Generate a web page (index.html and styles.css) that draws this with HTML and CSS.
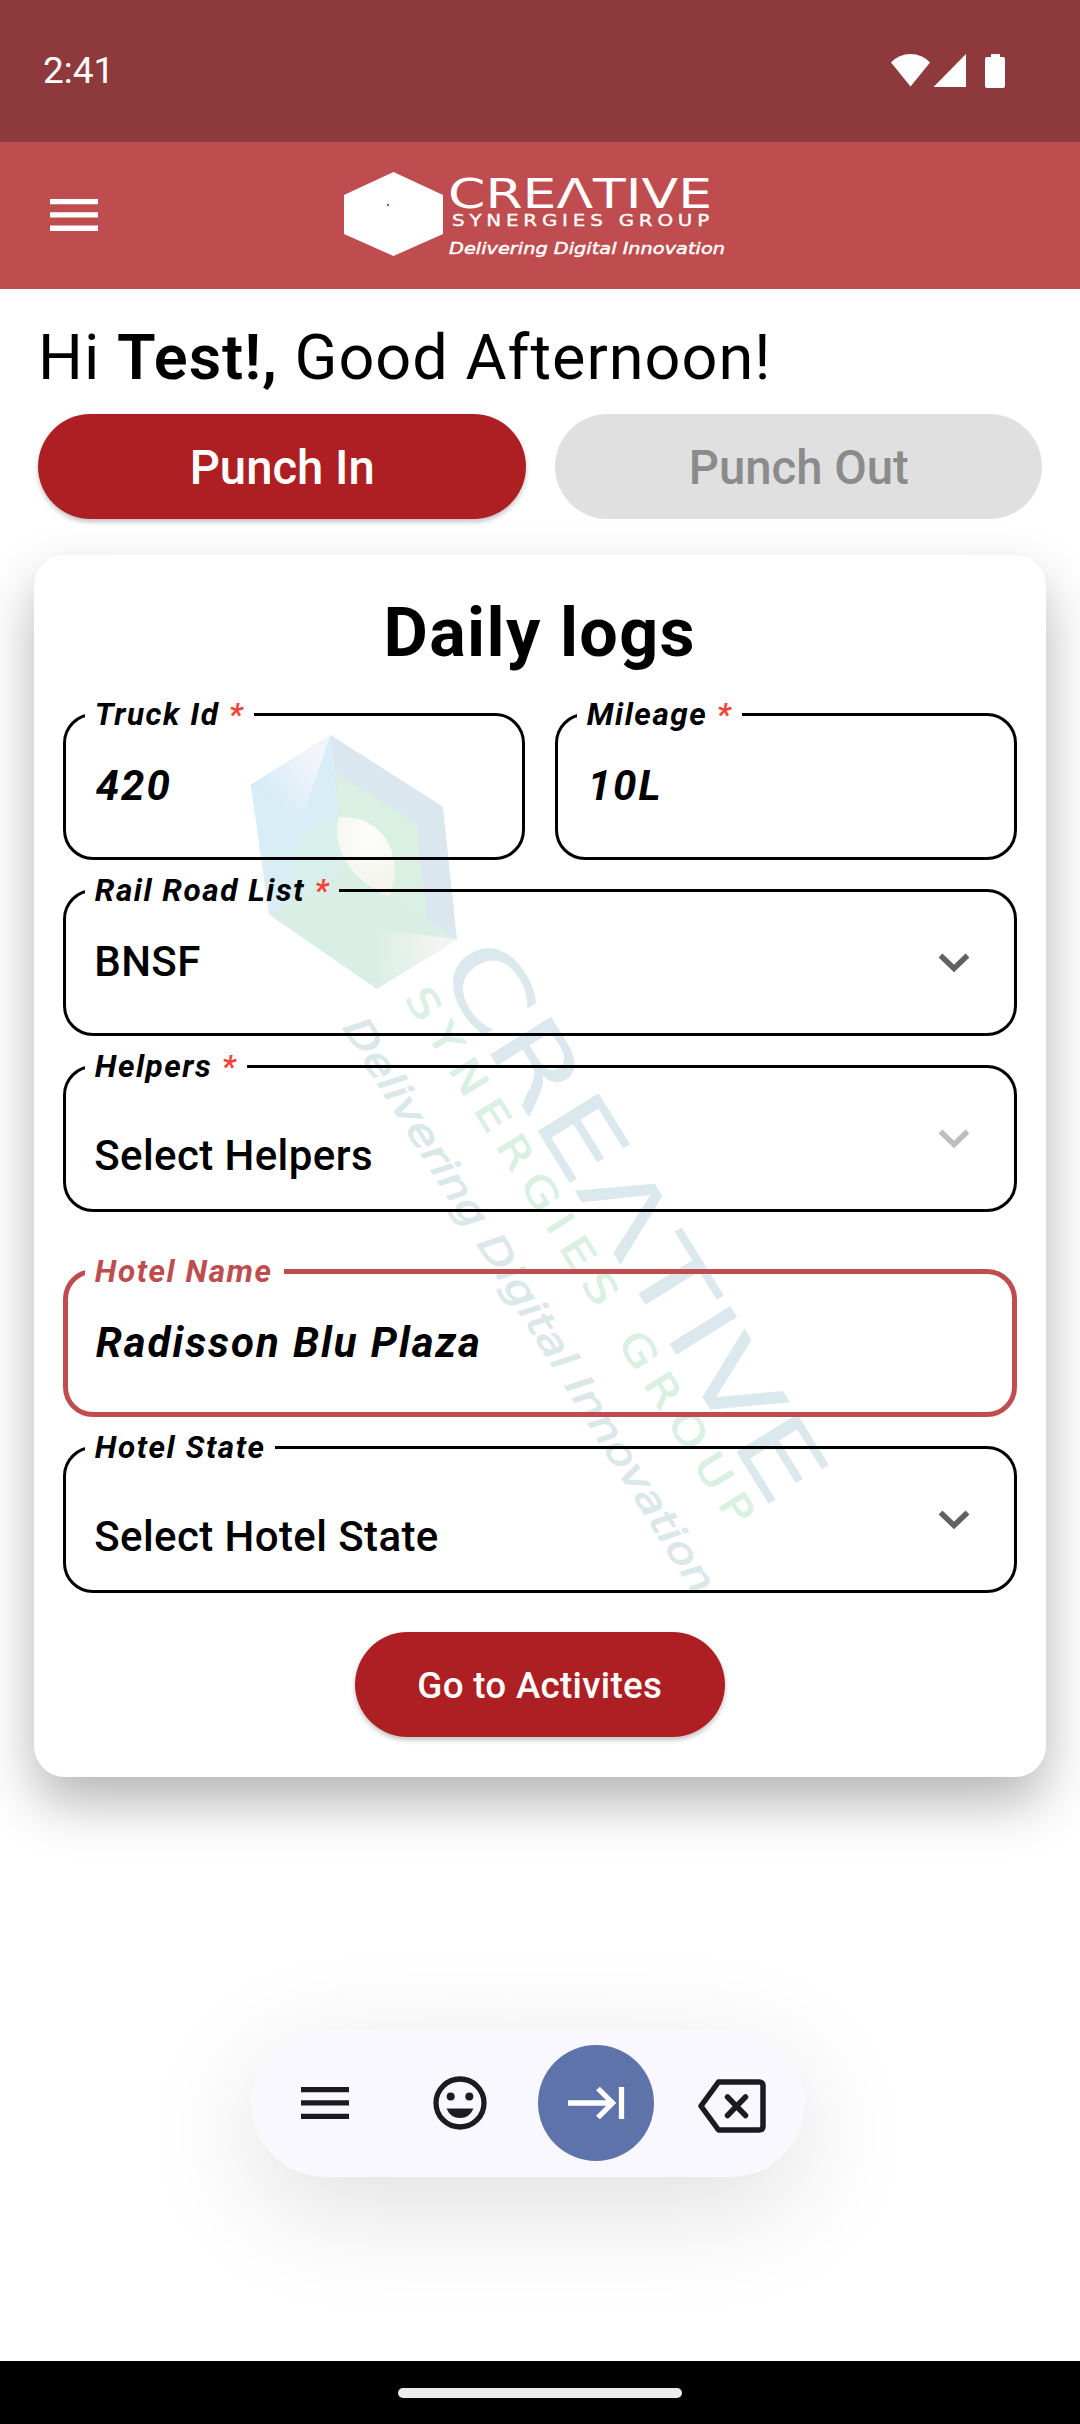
FILE: index.html
```html
<!DOCTYPE html>
<html lang="en">
<head>
<meta charset="utf-8">
<title>Daily logs</title>
<link rel="stylesheet" href="styles.css">
</head>
<body>
<header class="status">
  <span class="time">2:41</span>
  <svg class="status-icons" width="116" height="36" viewBox="890 53 116 36" fill="#fff">
    <path d="M910.5 86.5 L891 62.5Q899 54 910.5 54 Q922 54 930 62.5Z"/>
    <path d="M966 54V87H933.5Z"/>
    <path d="M991 54h9v3h3q2 0 2 2v27q0 2-2 2h-16q-2 0-2-2V59q0-2 2-2h4z"/>
  </svg>
</header>
<nav class="appbar">
  <svg class="menu" width="48" height="32" viewBox="0 0 48 32" fill="#fff"><path d="M0 0h48v5.3H0zM0 13.3h48v5.3H0zM0 26.6h48v5.3H0z"/></svg>
  <svg class="logo" width="384" height="90" viewBox="0 0 384 90">
    <path d="M49.5 0 99 23V62L49.5 84 0 62V23Z" fill="#fff"/>
    <rect x="43" y="32" width="2" height="2" fill="#bf4d4f"/>
    <g fill="#fff" stroke="#fff">
      <text class="logo-name" x="104" y="36" textLength="264" lengthAdjust="spacingAndGlyphs">CREΛTIVE</text>
      <text class="logo-sub" x="108" y="54" textLength="262" lengthAdjust="spacingAndGlyphs">SYNERGIES GROUP</text>
      <text class="logo-tag" x="105" y="82" textLength="276" lengthAdjust="spacingAndGlyphs">Delivering Digital Innovation</text>
    </g>
  </svg>
</nav>
<main>
  <h1 class="greeting">Hi <b>Test!,</b> Good Afternoon!</h1>
  <div class="punch">
    <button class="btn">Punch In</button>
    <button class="btn off">Punch Out</button>
  </div>
  <section class="card">
    <svg class="watermark" width="1013" height="1222" viewBox="33 555 1013 1222">
      <defs>
        <linearGradient id="facet" gradientUnits="userSpaceOnUse" x1="322" y1="762" x2="275" y2="800"><stop offset="0" stop-color="#f3f5fb"/><stop offset="1" stop-color="#d9ecf6"/></linearGradient>
        <linearGradient id="foot" gradientUnits="userSpaceOnUse" x1="440" y1="945" x2="372" y2="950"><stop offset="0" stop-color="#f3f5f3"/><stop offset="1" stop-color="#d9eee4"/></linearGradient>
        <radialGradient id="pearl" gradientUnits="userSpaceOnUse" cx="368" cy="837" r="45"><stop offset="0" stop-color="#fdfdfc"/><stop offset="1" stop-color="#f5f5ee"/></radialGradient>
      </defs>
      <path fill="#d9edf6" d="M330.600 735 343 869 269 914.500 250.700 784.700Z"/>
      <path fill="url(#facet)" d="M330.600 735 302 818 250.700 784.700Z"/>
      <path fill="#dbe7ee" d="M330.600 735 442.900 806.700 457 939.300 343 869Z"/>
      <path fill="#d9f0e3" d="M335.400 773 416 823 427 919.300 457 939.300 400 940 343 869Z"/>
      <path fill="#d9eee4" d="M343 869 457 939.300 376.800 989 269 914.500Z"/>
      <path fill="#d9efeb" d="M339 817A51 51 0 0 0 300 892L343 869Z"/>
      <path fill="url(#foot)" d="M360.600 927 457 939.300 376.800 989Z"/>
      <path fill="url(#pearl)" d="M339 817.500C380 813 407 854 389 896C360 887 328 851 339 817.500Z"/>
      <g transform="translate(353.7 862) rotate(58.2) scale(2.425) translate(-49.5 -42)">
        <text class="logo-name" fill="#dbe8ee" x="104" y="36" textLength="264" lengthAdjust="spacingAndGlyphs">CREΛTIVE</text>
        <text class="logo-sub" fill="#d9f0e3" stroke="#d9f0e3" x="108" y="54" textLength="262" lengthAdjust="spacingAndGlyphs">SYNERGIES GROUP</text>
        <text class="logo-tag" fill="#dbe8ea" stroke="#dbe8ea" x="105" y="82" textLength="276" lengthAdjust="spacingAndGlyphs">Delivering Digital Innovation</text>
      </g>
    </svg>
    <h2>Daily logs</h2>
    <div class="fields">
      <div class="pair">
        <fieldset><legend>Truck Id <i>*</i></legend><span class="value typed">420</span></fieldset>
        <fieldset><legend>Mileage <i>*</i></legend><span class="value typed">10L</span></fieldset>
      </div>
      <fieldset><legend>Rail Road List <i>*</i></legend><span class="value">BNSF</span><svg class="chev" width="32" height="20" viewBox="0 0 32 20"><path d="M2.500 2.500 16 15.500 29.500 2.500"/></svg></fieldset>
      <fieldset><legend>Helpers <i>*</i></legend><span class="value low">Select Helpers</span><svg class="chev dim" width="32" height="20" viewBox="0 0 32 20"><path d="M2.500 2.500 16 15.500 29.500 2.500"/></svg></fieldset>
      <fieldset class="focused"><legend>Hotel Name</legend><span class="value typed">Radisson Blu Plaza</span></fieldset>
      <fieldset><legend>Hotel State</legend><span class="value low">Select Hotel State</span><svg class="chev" width="32" height="20" viewBox="0 0 32 20"><path d="M2.500 2.500 16 15.500 29.500 2.500"/></svg></fieldset>
    </div>
    <button class="btn go">Go to Activites</button>
  </section>
</main>
<div class="keys">
  <svg width="48" height="32" viewBox="0 0 48 32" fill="#1b1b20"><path d="M0 0h48v5.300H0zM0 13.300h48v5.300H0zM0 26.700h48V32H0z"/></svg>
  <svg width="54" height="54" viewBox="0 0 54 54" fill="#1b1b20"><circle cx="27" cy="27" r="24" fill="none" stroke="#1b1b20" stroke-width="5.300"/><circle cx="17.700" cy="20.500" r="4"/><circle cx="36.300" cy="20.500" r="4"/><path d="M13.500 32.500h27Q36.500 42 27 42T13.500 32.500Z"/></svg>
  <span class="tab"><svg width="57" height="34" viewBox="0 0 57 34" fill="none" stroke="#fff" stroke-width="5.300"><path d="M0 17h45M30 2.500 44.500 17 30 31.500M53.500 1v32"/></svg></span>
  <svg class="back" width="68" height="54" viewBox="0 0 68 54" fill="none" stroke="#1b1b20" stroke-width="5.500" stroke-linejoin="round" stroke-linecap="round"><path d="M20.500 3H61q4 0 4 4V47q0 4-4 4H20.500L3 27ZM29.500 18 47.500 36.500M47.500 18 29.500 36.500"/></svg>
</div>
<footer class="gesture"><span></span></footer>
</body>
</html>
```
FILE: styles.css
```css
* { box-sizing: border-box; }
body {
  margin: 0;
  width: 1080px;
  height: 2424px;
  display: flex;
  flex-direction: column;
  overflow: hidden;
  background: #fff;
  color: #000;
  font-family: Roboto, sans-serif;
}
svg { display: block; flex: none; }
.status {
  height: 142px;
  flex: none;
  padding: 0 74px 0 43px;
  display: flex;
  align-items: center;
  justify-content: space-between;
  background: #8e3a3d;
}
.time { font-size: 37px; line-height: 44px; color: #fff; }
.appbar {
  height: 147px;
  flex: none;
  display: flex;
  align-items: flex-start;
  padding: 30px 0 0 50px;
  background: #bf4d4f;
}
.menu { margin-top: 27px; }
.logo { margin-left: 245.5px; overflow: visible; }
.logo-name { font: 400 40.5px "DejaVu Sans", sans-serif; stroke: none; }
.logo-sub { font: 400 16.5px "DejaVu Sans", sans-serif; letter-spacing: 4px; stroke-width: 0.35; }
.logo-tag { font: italic 400 15.5px "DejaVu Sans", sans-serif; stroke-width: 0.45; }

main { padding: 31px 34px 0; }
.greeting {
  margin: 0;
  padding-left: 4px;
  font-size: 63px;
  font-weight: 400;
  line-height: 76px;
  letter-spacing: 1px;
  white-space: nowrap;
}
.greeting b { font-weight: 600; }
.punch {
  display: grid;
  grid-template-columns: 1fr 1fr;
  gap: 29px;
  margin: 18px 4px 36px;
}
.btn {
  height: 105px;
  padding: 2px 0 0 1px;
  border: 0;
  border-radius: 53px;
  background: #ae1f23;
  color: #fff;
  font: 500 47.25px Roboto, sans-serif;
  box-shadow: 0 3px 5px rgba(0, 0, 0, 0.24);
}
.btn.off { background: #e0e0e0; color: #8b8b8b; box-shadow: none; }

.card {
  position: relative;
  height: 1222px;
  margin-left: -0.5px;
  display: flex;
  flex-direction: column;
  align-items: center;
  border-radius: 31px;
  background: #fff;
  box-shadow: 0 26px 54px rgba(0, 0, 0, 0.29);
}
.watermark { position: absolute; left: -1px; top: 0; }
.card h2 {
  position: relative;
  margin: 38px 0 23px;
  font-size: 68.25px;
  font-weight: 700;
  line-height: 81px;
  letter-spacing: 1.35px;
}
.fields {
  position: relative;
  width: 954px;
  display: flex;
  flex-direction: column;
  gap: 13px;
}
.pair { display: grid; grid-template-columns: 1fr 1fr; gap: 30px; }
fieldset {
  margin: 0;
  min-width: 0;
  height: 163px;
  padding: 0 44px 0 19px;
  display: flex;
  justify-content: space-between;
  border: 3px solid #000;
  border-radius: 30px;
}
legend {
  padding: 2px 9.5px 0 10px;
  font: italic 700 31.5px/32px Roboto, sans-serif;
  letter-spacing: 1.55px;
  white-space: nowrap;
}
legend i { color: #f44336; }
.value {
  padding: 30px 0 0 9.5px;
  font-size: 42px;
  font-weight: 500;
  line-height: 50px;
  letter-spacing: 0.4px;
}
.value.low { padding-top: 47.5px; }
.value.typed { padding-left: 11px; font-weight: 700; font-style: italic; letter-spacing: 1.95px; }
.chev {
  margin-top: 46px;
  fill: none;
  stroke: #616161;
  stroke-width: 5.5;
}
.chev.dim { stroke: #bdbdbd; }
.focused { margin-top: 29px; border: 5px solid #bf4d4f; padding-left: 17px; }
.focused legend { color: #bf4d4f; padding-right: 11px; }
.btn.go {
  position: relative;
  width: 370px;
  margin-top: 39px;
  padding-left: 0;
  font-size: 36.75px;
  letter-spacing: 0.3px;
}

.keys {
  width: 554px;
  height: 148px;
  flex: none;
  margin: 252px 0 0 250.5px;
  display: flex;
  align-items: center;
  padding-left: 50px;
  border-radius: 74px;
  background: #f9f8fe;
  box-shadow: 0 30px 115px rgba(0, 0, 0, 0.13);
}
.keys > :nth-child(2) { margin-left: 84.5px; }
.tab {
  width: 116px;
  height: 116px;
  margin-left: 50.5px;
  padding-left: 2px;
  display: grid;
  place-items: center;
  border-radius: 50%;
  background: #5e73aa;
}
.back { margin: 5px 0 0 44px; }
.gesture {
  height: 63px;
  flex: none;
  margin-top: auto;
  display: flex;
  justify-content: center;
  padding-top: 27px;
  background: #000;
}
.gesture span { width: 284px; height: 10px; border-radius: 5px; background: #ebebeb; }
```
